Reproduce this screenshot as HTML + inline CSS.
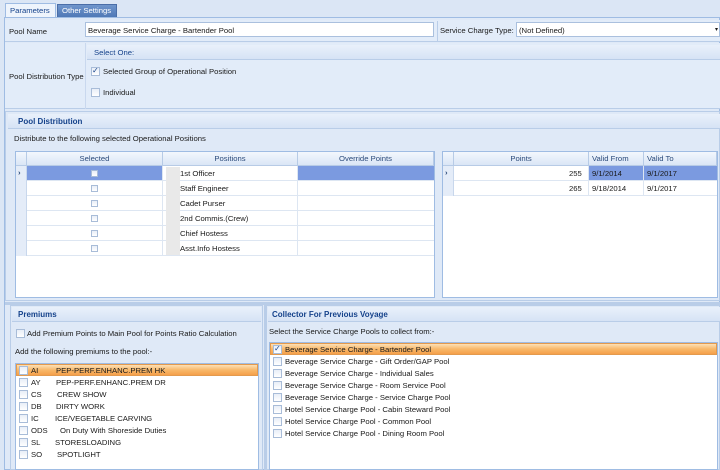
<!DOCTYPE html>
<html><head><style>
*{box-sizing:border-box;margin:0;padding:0}
body{width:720px;height:470px;overflow:hidden;background:#dbe6f5;font-family:"Liberation Sans",sans-serif;font-size:7.7px;color:#1a1a1a;position:relative}
.a{position:absolute}
.t{position:absolute;white-space:nowrap;line-height:10px}
.hdr{background:linear-gradient(#e9f1fb,#d6e3f5);border-bottom:1px solid #b9cde8}
.bt{color:#15428b;font-weight:bold;font-size:8px}
.cb{position:absolute;width:9px;height:9px;border:1px solid #a8bcd8;background:linear-gradient(#e8eef7,#fff)}
.gh{position:absolute;top:0;height:14px;background:linear-gradient(#f3f7fd,#dae6f6);border-right:1px solid #b7cbe6;border-bottom:1px solid #b7cbe6;text-align:center;color:#2b4a7a;line-height:13px}
.row{position:absolute;left:0;right:0;height:15px;border-bottom:1px solid #dde6f2}
.sel{background:linear-gradient(#fde0b5,#f8b86a 50%,#f5a04a);border:1px solid #e39a4e}
</style></head><body>
<div class="a" style="left:5px;top:3px;width:51px;height:14px;background:#eef4fc;border:1px solid #9fbce3;border-bottom:none"></div>
<div class="t" style="left:10px;top:6px;color:#15428b">Parameters</div>
<div class="a" style="left:57px;top:4px;width:60px;height:13px;background:linear-gradient(#6f95cc,#4f78b6);border:1px solid #4a6ea8;border-bottom:none"></div>
<div class="t" style="left:62px;top:6px;color:#fff">Other Settings</div>
<div class="a" style="left:4px;top:17px;width:716px;height:453px;border:1px solid #9fbce3;background:#dfe9f7"></div>
<div class="a" style="left:5px;top:20px;width:715px;height:22px;background:#e2ecf9;border-bottom:1px solid #b9cde8"></div>
<div class="t" style="left:9px;top:27px">Pool Name</div>
<div class="a" style="left:85px;top:22px;width:349px;height:15px;background:#fff;border:1px solid #aac0de"></div>
<div class="t" style="left:88px;top:26px">Beverage Service Charge - Bartender Pool</div>
<div class="a" style="left:437px;top:21px;width:1px;height:20px;background:#b9cde8"></div>
<div class="t" style="left:440px;top:26px">Service Charge Type:</div>
<div class="a" style="left:516px;top:22px;width:204px;height:15px;background:#fff;border:1px solid #aac0de"></div>
<div class="t" style="left:519px;top:26px">(Not Defined)</div>
<div class="t" style="left:715px;top:25px;font-size:6px">▾</div>
<div class="a" style="left:5px;top:43px;width:715px;height:66px;background:#e2ecf9;border-bottom:1px solid #b9cde8"></div>
<div class="t" style="left:9px;top:72px">Pool Distribution Type</div>
<div class="a" style="left:85px;top:43px;width:1px;height:66px;background:#c9d8ee"></div>
<div class="a hdr" style="left:87px;top:45px;width:633px;height:15px"></div>
<div class="t" style="left:94px;top:48px;color:#15428b">Select One:</div>
<div class="cb" style="left:91px;top:67px"></div><div class="t" style="left:92px;top:66px;color:#15428b;font-size:8px">✓</div>
<div class="t" style="left:103px;top:67px">Selected Group of Operational Position</div>
<div class="cb" style="left:91px;top:88px"></div>
<div class="t" style="left:103px;top:88px">Individual</div>
<div class="a" style="left:5px;top:111px;width:715px;height:190px;border:1px solid #b9cde8;background:#dfe9f7"></div>
<div class="a hdr" style="left:8px;top:114px;width:712px;height:15px"></div>
<div class="t bt" style="left:18px;top:117px">Pool Distribution</div>
<div class="t" style="left:14px;top:134px">Distribute to the following selected Operational Positions</div>
<div class="a" style="left:15px;top:151px;width:420px;height:147px;background:#fff;border:1px solid #9fbce3">
 <div class="gh" style="left:0;width:11px"></div>
 <div class="gh" style="left:11px;width:136px">Selected</div>
 <div class="gh" style="left:147px;width:135px">Positions</div>
 <div class="gh" style="left:282px;width:136px">Override Points</div>
 <div class="row" style="top:14px;background:#fff"><div class="a" style="left:11px;top:0;width:135px;height:14px;background:#7b9ae0"></div><div class="a" style="left:282px;top:0;width:136px;height:14px;background:#7b9ae0"></div></div>
 <div class="row" style="top:29px"></div><div class="row" style="top:44px"></div><div class="row" style="top:59px"></div><div class="row" style="top:74px"></div><div class="row" style="top:89px"></div>
 <div class="a" style="left:0;top:14px;width:11px;height:90px;background:#e4ecf8;border-right:1px solid #c8d7ec"></div>
 <div class="t" style="left:2px;top:16px;color:#2b4a7a;font-weight:bold">›</div>
 <div class="a" style="left:146px;top:14px;width:1px;height:90px;background:#dde6f2"></div>
 <div class="a" style="left:281px;top:14px;width:1px;height:90px;background:#dde6f2"></div>
 <div class="cb" style="left:75px;top:18px;width:7px;height:7px"></div><div class="cb" style="left:75px;top:33px;width:7px;height:7px"></div><div class="cb" style="left:75px;top:48px;width:7px;height:7px"></div><div class="cb" style="left:75px;top:63px;width:7px;height:7px"></div><div class="cb" style="left:75px;top:78px;width:7px;height:7px"></div><div class="cb" style="left:75px;top:93px;width:7px;height:7px"></div>
 <div class="a" style="left:150px;top:15px;width:14px;height:88px;background:#e9e9e9"></div>
 <div class="t" style="left:164px;top:17px">1st Officer</div>
 <div class="t" style="left:164px;top:32px">Staff Engineer</div>
 <div class="t" style="left:164px;top:47px">Cadet Purser</div>
 <div class="t" style="left:164px;top:62px">2nd Commis.(Crew)</div>
 <div class="t" style="left:164px;top:77px">Chief Hostess</div>
 <div class="t" style="left:164px;top:92px">Asst.Info Hostess</div>
</div>
<div class="a" style="left:442px;top:151px;width:276px;height:147px;background:#fff;border:1px solid #9fbce3">
 <div class="gh" style="left:0;width:11px"></div>
 <div class="gh" style="left:11px;width:135px">Points</div>
 <div class="gh" style="left:146px;width:55px;text-align:left;padding-left:3px">Valid From</div>
 <div class="gh" style="left:201px;width:73px;text-align:left;padding-left:3px">Valid To</div>
 <div class="row" style="top:14px"><div class="a" style="left:146px;top:0;width:128px;height:14px;background:#7b9ae0"></div></div>
 <div class="row" style="top:29px"></div>
 <div class="a" style="left:0;top:14px;width:11px;height:30px;background:#e4ecf8;border-right:1px solid #c8d7ec"></div>
 <div class="t" style="left:2px;top:16px;color:#2b4a7a;font-weight:bold">›</div>
 <div class="a" style="left:145px;top:14px;width:1px;height:30px;background:#dde6f2"></div>
 <div class="a" style="left:200px;top:14px;width:1px;height:30px;background:#dde6f2"></div>
 <div class="t" style="left:126px;top:17px">255</div><div class="t" style="left:149px;top:17px">9/1/2014</div><div class="t" style="left:204px;top:17px">9/1/2017</div>
 <div class="t" style="left:126px;top:32px">265</div><div class="t" style="left:149px;top:32px">9/18/2014</div><div class="t" style="left:204px;top:32px">9/1/2017</div>
</div>
<div class="a" style="left:5px;top:302px;width:715px;height:3px;background:#b9cde8"></div>
<div class="a" style="left:10px;top:305px;width:253px;height:165px;border:1px solid #b9cde8;background:#dfe9f7"></div>
<div class="a hdr" style="left:12px;top:307px;width:249px;height:15px"></div>
<div class="t bt" style="left:18px;top:310px">Premiums</div>
<div class="cb" style="left:16px;top:329px"></div>
<div class="t" style="left:27px;top:329px">Add Premium Points to Main Pool for Points Ratio Calculation</div>
<div class="t" style="left:15px;top:347px">Add the following premiums to the pool:-</div>
<div class="a" style="left:15px;top:363px;width:244px;height:107px;background:#fff;border:1px solid #9fbce3"></div>
<div class="a sel" style="left:16px;top:364px;width:242px;height:12px"></div>
<div class="cb" style="left:19px;top:366px"></div><div class="t" style="left:31px;top:366px">AI</div><div class="t" style="left:56px;top:366px">PEP-PERF.ENHANC.PREM HK</div>
<div class="cb" style="left:19px;top:378px"></div><div class="t" style="left:31px;top:378px">AY</div><div class="t" style="left:56px;top:378px">PEP-PERF.ENHANC.PREM DR</div>
<div class="cb" style="left:19px;top:390px"></div><div class="t" style="left:31px;top:390px">CS</div><div class="t" style="left:57px;top:390px">CREW SHOW</div>
<div class="cb" style="left:19px;top:402px"></div><div class="t" style="left:31px;top:402px">DB</div><div class="t" style="left:56px;top:402px">DIRTY WORK</div>
<div class="cb" style="left:19px;top:414px"></div><div class="t" style="left:31px;top:414px">IC</div><div class="t" style="left:55px;top:414px">ICE/VEGETABLE CARVING</div>
<div class="cb" style="left:19px;top:426px"></div><div class="t" style="left:31px;top:426px">ODS</div><div class="t" style="left:60px;top:426px">On Duty With Shoreside Duties</div>
<div class="cb" style="left:19px;top:438px"></div><div class="t" style="left:31px;top:438px">SL</div><div class="t" style="left:55px;top:438px">STORESLOADING</div>
<div class="cb" style="left:19px;top:450px"></div><div class="t" style="left:31px;top:450px">SO</div><div class="t" style="left:57px;top:450px">SPOTLIGHT</div>
<div class="a" style="left:264px;top:305px;width:2px;height:165px;background:#b9cde8"></div>
<div class="a" style="left:266px;top:305px;width:454px;height:165px;border:1px solid #b9cde8;background:#dfe9f7"></div>
<div class="a hdr" style="left:268px;top:307px;width:452px;height:15px"></div>
<div class="t bt" style="left:272px;top:310px">Collector For Previous Voyage</div>
<div class="t" style="left:269px;top:327px">Select the Service Charge Pools to collect from:-</div>
<div class="a" style="left:269px;top:342px;width:449px;height:128px;background:#fff;border:1px solid #9fbce3"></div>
<div class="a sel" style="left:270px;top:343px;width:447px;height:12px"></div>
<div class="cb" style="left:273px;top:345px"></div><div class="t" style="left:274px;top:344px;color:#15428b;font-size:8px">✓</div>
<div class="t" style="left:285px;top:345px">Beverage Service Charge - Bartender Pool</div>
<div class="cb" style="left:273px;top:357px"></div><div class="t" style="left:285px;top:357px">Beverage Service Charge - Gift Order/GAP Pool</div>
<div class="cb" style="left:273px;top:369px"></div><div class="t" style="left:285px;top:369px">Beverage Service Charge - Individual Sales</div>
<div class="cb" style="left:273px;top:381px"></div><div class="t" style="left:285px;top:381px">Beverage Service Charge - Room Service Pool</div>
<div class="cb" style="left:273px;top:393px"></div><div class="t" style="left:285px;top:393px">Beverage Service Charge - Service Charge Pool</div>
<div class="cb" style="left:273px;top:405px"></div><div class="t" style="left:285px;top:405px">Hotel Service Charge Pool - Cabin Steward Pool</div>
<div class="cb" style="left:273px;top:417px"></div><div class="t" style="left:285px;top:417px">Hotel Service Charge Pool - Common Pool</div>
<div class="cb" style="left:273px;top:429px"></div><div class="t" style="left:285px;top:429px">Hotel Service Charge Pool - Dining Room Pool</div>
</body></html>
